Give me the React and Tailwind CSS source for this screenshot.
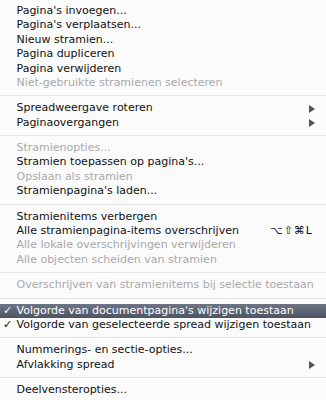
const GROUPS = [
  [
    { label: "Pagina's invoegen..." },
    { label: "Pagina's verplaatsen..." },
    { label: "Nieuw stramien..." },
    { label: "Pagina dupliceren" },
    { label: "Pagina verwijderen" },
    { label: "Niet-gebruikte stramienen selecteren", disabled: true },
  ],
  [
    { label: "Spreadweergave roteren", submenu: true },
    { label: "Paginaovergangen", submenu: true },
  ],
  [
    { label: "Stramienopties...", disabled: true },
    { label: "Stramien toepassen op pagina's..." },
    { label: "Opslaan als stramien", disabled: true },
    { label: "Stramienpagina's laden..." },
  ],
  [
    { label: "Stramienitems verbergen" },
    { label: "Alle stramienpagina-items overschrijven", shortcut: "⌥⇧⌘L" },
    { label: "Alle lokale overschrijvingen verwijderen", disabled: true },
    { label: "Alle objecten scheiden van stramien", disabled: true },
  ],
  [{ label: "Overschrijven van stramienitems bij selectie toestaan", disabled: true }],
  [
    { label: "Volgorde van documentpagina's wijzigen toestaan", checked: true, active: true },
    { label: "Volgorde van geselecteerde spread wijzigen toestaan", checked: true },
  ],
  [
    { label: "Nummerings- en sectie-opties..." },
    { label: "Afvlakking spread", submenu: true },
  ],
  [{ label: "Deelvensteropties..." }],
];

function MenuItem({ item }) {
  const color = item.active
    ? "text-white"
    : item.disabled
    ? "text-[#a9a9a9]"
    : "text-[#111]";
  return (
    <div
      className={`relative flex items-center h-[14.4px] pl-[16.5px] pr-[10px] whitespace-nowrap ${color} ${
        item.active ? "bg-gradient-to-b from-[#6d7484] to-[#4d5462]" : ""
      }`}
    >
      {item.checked && (
        <span className="absolute left-[3px] top-0 text-[11px] leading-[14.4px]">✓</span>
      )}
      <span className="flex-1">{item.label}</span>
      {item.shortcut && (
        <span className="tracking-[1px] mr-[3px]">{item.shortcut}</span>
      )}
      {item.submenu && (
        <span className="w-0 h-0 border-y-[4px] border-y-transparent border-l-[6px] border-l-[#555] mr-[1px]" />
      )}
    </div>
  );
}

export default function App() {
  return (
    <div className="w-[326px] h-[400px] overflow-hidden bg-[#fbfbfb] pt-[4px] text-[11px] font-['DejaVu_Sans',sans-serif]">
      {GROUPS.map((group, gi) => (
        <div key={gi}>
          {gi > 0 && (
            <div className="h-[11px] flex items-center">
              <div className="h-px w-full bg-[#e4e4e4]" />
            </div>
          )}
          {group.map((item) => (
            <MenuItem key={item.label} item={item} />
          ))}
        </div>
      ))}
    </div>
  );
}
